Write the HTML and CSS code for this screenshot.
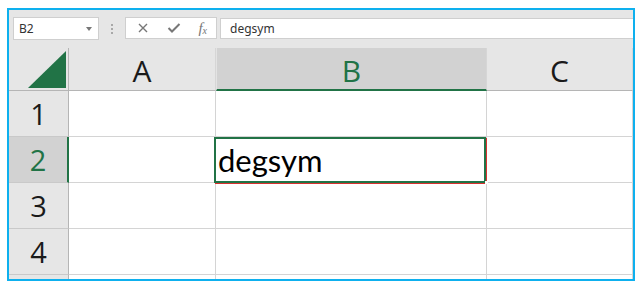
FILE: index.html
```html
<!DOCTYPE html>
<html>
<head>
<meta charset="utf-8">
<link rel="stylesheet" href="styles.css">
</head>
<body>
<div class="frame">
  <div class="fbar">
    <div class="namebox"><span class="nb-text">B2</span><span class="nb-arrow"></span></div>
    <div class="dots"><i></i><i></i><i></i></div>
    <div class="fbtns">
      <svg class="ico" width="12" height="12" viewBox="0 0 12 12"><path d="M2 2 L10 10 M10 2 L2 10" stroke="#777" stroke-width="1.4" fill="none"/></svg>
      <svg class="ico" width="14" height="12" viewBox="0 0 14 12"><path d="M1.5 6 L5 9.5 L12.5 2" stroke="#777" stroke-width="2" fill="none"/></svg>
      <span class="fx">f<sub>x</sub></span>
    </div>
    <div class="finput">degsym</div>
  </div>
  <div class="sheet">
    <div class="corner"><svg width="38" height="37" viewBox="0 0 38 37"><path d="M0 37 L38 37 L38 0 Z" fill="#217346"/></svg></div>
    <div class="ch">A</div>
    <div class="ch ch-sel">B</div>
    <div class="ch">C</div>

    <div class="rh">1</div>
    <div class="c"></div>
    <div class="c"></div>
    <div class="c"></div>

    <div class="rh rh-sel">2</div>
    <div class="c"></div>
    <div class="c active"><span class="val">degsym</span><div class="sel-red"></div><div class="sel"></div><div class="handle"></div></div>
    <div class="c"></div>

    <div class="rh">3</div>
    <div class="c"></div>
    <div class="c"></div>
    <div class="c"></div>

    <div class="rh">4</div>
    <div class="c"></div>
    <div class="c"></div>
    <div class="c"></div>

    <div class="rh"></div>
    <div class="c"></div>
    <div class="c"></div>
    <div class="c"></div>
  </div>
</div>
</body>
</html>
```
FILE: styles.css
```css
* { box-sizing: border-box; }
html, body { margin: 0; padding: 0; background: #ffffff; }
body { font-family: "Open Sans", "Noto Sans", sans-serif; }

.frame {
  margin: 8px 0 0 7px;
  width: 628px;
  height: 273px;
  border: 2px solid #0eb0ee;
  background: #e6e6e6;
  overflow: hidden;
  display: flex;
  flex-direction: column;
}

.fbar {
  height: 38px;
  flex: none;
  display: flex;
  align-items: flex-start;
  padding: 7px 0 0 4px;
  background: #e6e6e6;
}

.namebox {
  width: 86px;
  height: 23px;
  background: #fff;
  border: 1px solid #cfcfcf;
  display: flex;
  align-items: center;
  justify-content: space-between;
  padding: 0 6px 0 5px;
}
.nb-text { font-size: 12px; color: #333; font-family: "Noto Sans", sans-serif; }
.nb-arrow {
  width: 0; height: 0;
  border-left: 3.5px solid transparent;
  border-right: 3.5px solid transparent;
  border-top: 4px solid #777;
}

.dots {
  width: 26px;
  height: 23px;
  display: flex;
  flex-direction: column;
  align-items: center;
  justify-content: center;
  gap: 2px;
}
.dots i { display: block; width: 2px; height: 2px; background: #a8a8a8; }

.fbtns {
  width: 92px;
  height: 22px;
  background: #fff;
  border: 1px solid #cfcfcf;
  display: flex;
  align-items: center;
  justify-content: space-between;
  padding: 0 9px 0 11px;
}
.ico { display: block; }
.fx { font-family: "Liberation Serif", serif; font-style: italic; font-size: 15px; color: #777; line-height: 1; }
.fx sub { font-size: 10px; vertical-align: -1px; }

.finput {
  flex: 1;
  margin-left: 3px;
  margin-top: 1px;
  height: 21px;
  background: #fff;
  border: 1px solid #cfcfcf;
  border-right: none;
  font-family: "Noto Sans", sans-serif;
  font-size: 12px;
  color: #333;
  padding: 0 0 0 9px;
  line-height: 19px;
}

.sheet {
  flex: 1;
  display: grid;
  grid-template-columns: 60px 147px 271px 1fr;
  grid-template-rows: 43px 46px 46px 46px 46px 46px;
  background: #fff;
  overflow: hidden;
}

.corner {
  background: #e6e6e6;
  border-right: 1px solid #b5b5b5;
  border-bottom: 1px solid #b5b5b5;
  display: flex;
  align-items: flex-end;
  justify-content: flex-end;
  padding: 0 2px 2px 0;
}
.corner svg { display: block; }

.ch {
  background: #e6e6e6;
  border-right: 1px solid #d6d6d6;
  border-bottom: 1px solid #b5b5b5;
  font-size: 30px;
  color: #1a1a1a;
  display: flex;
  align-items: center;
  justify-content: center;
  padding-top: 3px;
  line-height: 1;
}
.ch-sel {
  background: #d2d2d2;
  color: #217346;
  border-bottom: 2px solid #217346;
  border-left: 1px solid #e3e3e3;
  padding-top: 4px;
}

.rh {
  background: #e6e6e6;
  border-right: 1px solid #b5b5b5;
  border-bottom: 1px solid #c9c9c9;
  font-size: 29px;
  color: #1a1a1a;
  display: flex;
  align-items: center;
  justify-content: center;
  line-height: 1;
}
.rh-sel {
  background: #d2d2d2;
  color: #217346;
  border-right: 2px solid #217346;
}

.c {
  border-right: 1px solid #d4d4d4;
  border-bottom: 1px solid #d4d4d4;
}
.active {
  position: relative;
  display: flex;
  align-items: flex-end;
}
.val {
  font-family: "Lato", sans-serif;
  font-size: 31px;
  color: #000;
  line-height: 1;
  padding: 0 0 6px 2px;
}
.sel-red {
  position: absolute;
  left: -1px; top: 1px; right: -1px; bottom: -2px;
  border: 1px solid #d83030;
}
.sel {
  position: absolute;
  left: -2px; top: 0; right: 0; bottom: -1px;
  border: 2px solid #217346;
}
.handle {
  position: absolute;
  right: -2px; bottom: -2px;
  width: 3px; height: 3px;
  background: #fff;
}
```
